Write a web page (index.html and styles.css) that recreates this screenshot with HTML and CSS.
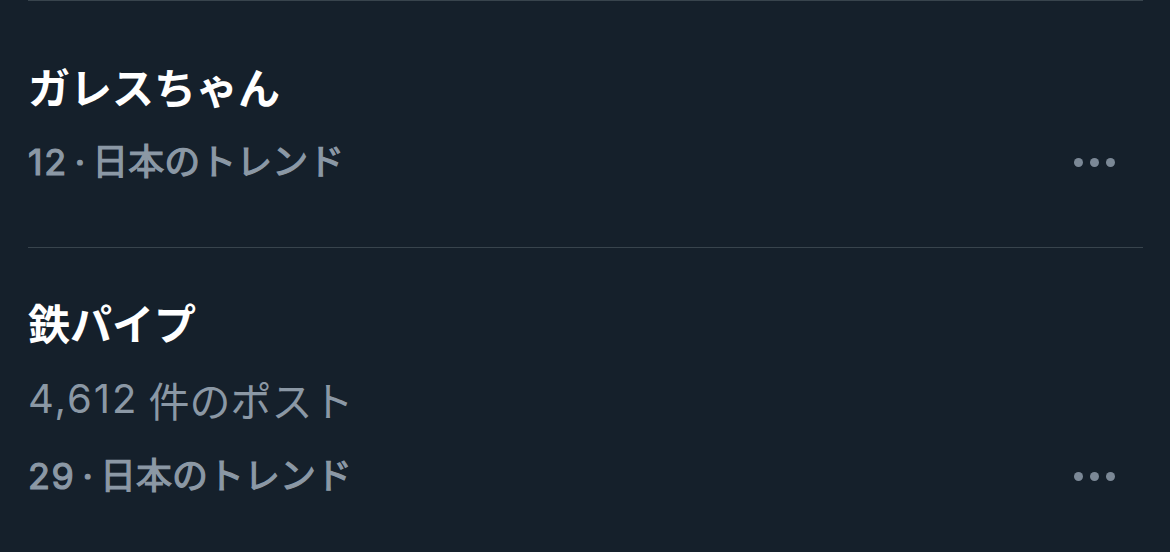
FILE: index.html
```html
<!DOCTYPE html>
<html lang="ja">
<head>
<meta charset="utf-8">
<title>トレンド</title>
<link rel="stylesheet" href="styles.css">
</head>
<body>
<div class="list">
  <div class="divider"></div>
  <div class="trend trend-first">
    <div class="trend-title">ガレスちゃん</div>
    <div class="trend-meta">
      <span class="meta-text"><span class="rank">12</span> · 日本のトレンド</span>
      <span class="more" aria-label="その他"><i></i><i></i><i></i></span>
    </div>
  </div>
  <div class="divider"></div>
  <div class="trend">
    <div class="trend-title">鉄パイプ</div>
    <div class="trend-posts"><span class="num">4,612</span><span class="jp">件のポスト</span></div>
    <div class="trend-meta">
      <span class="meta-text"><span class="rank">29</span> · 日本のトレンド</span>
      <span class="more" aria-label="その他"><i></i><i></i><i></i></span>
    </div>
  </div>
</div>
</body>
</html>
```

FILE: styles.css
```css
html, body {
  margin: 0;
  padding: 0;
  background: #15202b;
  height: 100%;
}
body {
  font-family: "Inter", "Noto Sans CJK JP", sans-serif;
  color: #f7f9f9;
  overflow: hidden;
}
.list {
  padding: 0 27px 0 28px;
  display: flex;
  flex-direction: column;
}
.divider {
  height: 1px;
  background: #38444d;
}
.trend {
  display: flex;
  flex-direction: column;
  padding: 49px 0 60px;
}
.trend-first {
  padding-top: 60px;
}
.trend-title {
  font-family: "Noto Sans CJK JP", sans-serif;
  font-weight: 700;
  font-size: 42px;
  line-height: 50px;
  color: #ffffff;
}
.trend-meta {
  display: flex;
  align-items: center;
  justify-content: space-between;
  padding-right: 28px;
  height: 50px;
  margin-top: 26px;
}
.trend-posts + .trend-meta {
  margin-top: 27px;
}
.meta-text {
  font-size: 36px;
  line-height: 50px;
  font-weight: 400;
  word-spacing: -3px;
  -webkit-text-stroke: 1.2px #8b98a5;
  color: #8b98a5;
}
.meta-text .rank {
  letter-spacing: 1.5px;
}
.trend-posts {
  font-size: 40px;
  line-height: 50px;
  font-weight: 400;
  color: #8b98a5;
  display: flex;
  align-items: center;
  margin-top: 27px;
}
.trend-posts .num {
  letter-spacing: 2px;
}
.trend-posts .jp {
  font-family: "Noto Sans CJK JP", sans-serif;
  font-size: 41px;
  margin-left: 10px;
}
.more {
  display: flex;
  gap: 7px;
  align-items: center;
}
.more i {
  display: block;
  width: 9px;
  height: 9px;
  border-radius: 50%;
  background: #7b8896;
}
```
